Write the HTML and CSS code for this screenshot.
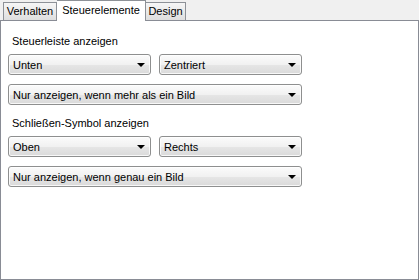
FILE: index.html
```html
<!DOCTYPE html>
<html lang="de">
<head>
    <meta charset="UTF-8">
    <title>Steuerelemente</title>
    <link rel="stylesheet" href="styles.css">
</head>
<body>
    <div class="window">
        <div class="tabs">
            <div class="tab tab-behavior">Verhalten</div>
            <div class="tab tab-controls active">Steuerelemente</div>
            <div class="tab tab-design">Design</div>
        </div>

        <div class="panel">
            <div class="group-label">Steuerleiste anzeigen</div>
            <div class="row">
                <div class="combo half"><span>Unten</span><i class="arrow"></i></div>
                <div class="combo half"><span>Zentriert</span><i class="arrow"></i></div>
            </div>
            <div class="row">
                <div class="combo full"><span>Nur anzeigen, wenn mehr als ein Bild</span><i class="arrow"></i></div>
            </div>

            <div class="group-label second">Schließen-Symbol anzeigen</div>
            <div class="row">
                <div class="combo half"><span>Oben</span><i class="arrow"></i></div>
                <div class="combo half"><span>Rechts</span><i class="arrow"></i></div>
            </div>
            <div class="row">
                <div class="combo full"><span>Nur anzeigen, wenn genau ein Bild</span><i class="arrow"></i></div>
            </div>
        </div>
    </div>
</body>
</html>
```

FILE: styles.css
```css
* {
    margin: 0;
    padding: 0;
    box-sizing: border-box;
}

body {
    background: #f0f0f0;
    font-family: "Liberation Sans", Arial, sans-serif;
    font-size: 11px;
    color: #000;
}

.window {
    width: 419px;
    height: 280px;
}

.tabs {
    display: flex;
    align-items: flex-end;
    height: 20px;
    padding-left: 3px;
}

.tab {
    height: 18px;
    line-height: 16px;
    text-align: center;
    border: 1px solid #8d9197;
    border-bottom: none;
    background: linear-gradient(#f6f6f6, #dedede);
    white-space: nowrap;
}

.tab-behavior { width: 54px; }
.tab-controls { width: 89px; }
.tab-design { width: 40px; }

.tab.active {
    height: 21px;
    margin-bottom: -1px;
    line-height: 18px;
    border-left: none;
    background: #fff;
    position: relative;
    z-index: 1;
}

.tab.active + .tab {
    border-left: none;
}

.panel {
    height: 260px;
    background: #fff;
    border: 1px solid #898c95;
    padding: 1px 7px 0;
}

.group-label {
    height: 14px;
    line-height: 14px;
    margin: 12px 0 6px 4px;
}

.group-label.second {
    margin-top: 11px;
}

.row {
    display: flex;
    gap: 8px;
    margin-bottom: 9px;
}

.combo {
    height: 21px;
    display: flex;
    align-items: center;
    justify-content: space-between;
    padding: 0 5px 0 4px;
    border: 1px solid #8e8f8f;
    border-radius: 3px;
    background: linear-gradient(#fbfbfb 0%, #f1f1f1 50%, #e6e6e6 51%, #dadada 100%);
    box-shadow: inset 0 0 0 1px rgba(255, 255, 255, 0.8);
}

.half {
    width: 143px;
}

.full {
    width: 294px;
}

.arrow {
    width: 0;
    height: 0;
    border-left: 4px solid transparent;
    border-right: 4px solid transparent;
    border-top: 4px solid #000;
}
```
